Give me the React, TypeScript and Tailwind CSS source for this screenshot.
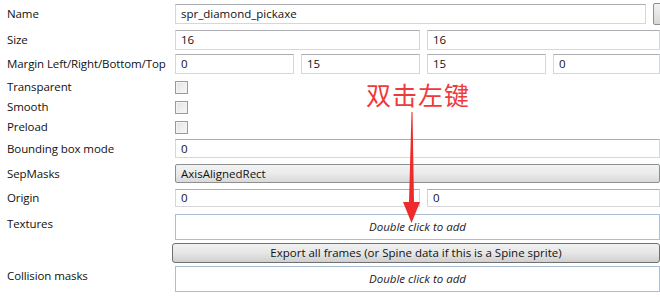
import React from "react";

const font = { fontFamily: '"Segoe UI", "Open Sans", "Noto Sans", sans-serif' };

function Field({ value, className = "" }: { value: string; className?: string }) {
  return (
    <div
      className={`h-full flex items-center pl-[5px] bg-white border border-[#d5d7db] border-t-[#abadb3] text-[11.5px] text-[#111] ${className}`}
    >
      {value}
    </div>
  );
}

function Check() {
  return (
    <div className="w-[13px] h-[13px] border border-[#9a9a9a] bg-gradient-to-br from-[#e2e2e2] to-[#f8f8f8] shadow-[inset_0_0_0_1px_#f4f4f4]" />
  );
}

function Row({
  label,
  h,
  mt,
  top = false,
  children,
}: {
  label: string;
  h: number;
  mt: number;
  top?: boolean;
  children: React.ReactNode;
}) {
  return (
    <div className="flex" style={{ height: h, marginTop: mt }}>
      <div
        className={`w-[175px] shrink-0 pl-[7px] whitespace-nowrap text-[11.5px] tracking-[-0.1px] text-[#111] flex ${top ? "items-start pt-[1px]" : "items-center"}`}
      >
        {label}
      </div>
      <div className="flex-1 min-w-0 flex items-center gap-[7px]">{children}</div>
    </div>
  );
}

function DropZone() {
  return (
    <div className="h-full w-full flex items-center justify-center bg-white border border-[#a9bfd6] text-[11.5px] italic text-[#222]">
      Double click to add
    </div>
  );
}

export default function App() {
  return (
    <div className="relative w-[660px] h-[297px] bg-white overflow-hidden" style={font}>
      <Row label="Name" h={20} mt={4}>
        <Field value="spr_diamond_pickaxe" className="flex-1" />
        <div className="w-[10px] h-[22px] -mr-[3px] border border-[#8e8f8f] rounded-[2px] bg-gradient-to-b from-[#f2f2f2] to-[#d8d8d8]" />
      </Row>
      <Row label="Size" h={20} mt={6}>
        <Field value="16" className="w-[245px]" />
        <Field value="16" className="flex-1" />
      </Row>
      <Row label="Margin Left/Right/Bottom/Top" h={20} mt={4}>
        <Field value="0" className="w-[119px]" />
        <Field value="15" className="w-[119px]" />
        <Field value="15" className="w-[119px]" />
        <Field value="0" className="flex-1" />
      </Row>
      <Row label="Transparent" h={18} mt={4}>
        <Check />
      </Row>
      <Row label="Smooth" h={18} mt={2}>
        <Check />
      </Row>
      <Row label="Preload" h={18} mt={2}>
        <Check />
      </Row>
      <Row label="Bounding box mode" h={19} mt={3}>
        <Field value="0" className="flex-1" />
      </Row>
      <Row label="SepMasks" h={19} mt={6}>
        <div className="h-full flex-1 flex items-center pl-[5px] border border-[#8e8f8f] rounded-[2px] bg-gradient-to-b from-[#f3f3f3] via-[#ebebeb] to-[#d9d9d9] text-[11.5px] text-[#111]">
          AxisAlignedRect
        </div>
      </Row>
      <Row label="Origin" h={18} mt={6}>
        <Field value="0" className="w-[245px]" />
        <Field value="0" className="flex-1" />
      </Row>
      <Row label="Textures" h={26} mt={7} top>
        <DropZone />
      </Row>
      <div className="flex h-[20px] mt-[3px] pl-[172px]">
        <div className="flex-1 flex items-center justify-center border border-[#707070] rounded-[3px] bg-gradient-to-b from-[#f2f2f2] via-[#e6e6e6] to-[#d0d0d0] text-[11.5px] text-[#111]">
          Export all frames (or Spine data if this is a Spine sprite)
        </div>
      </div>
      <Row label="Collision masks" h={26} mt={3} top>
        <DropZone />
      </Row>

      <div
        className="absolute left-[366px] top-[78px] text-[25px] leading-[32px] text-[#ee3a3a] tracking-[1px]"
        style={{ fontFamily: '"Noto Sans CJK SC", sans-serif' }}
      >
        双击左键
      </div>
      <svg className="absolute left-[400px] top-[110px]" width="26" height="116" viewBox="0 0 26 116">
        <polygon points="11.5,2 12.5,2 14,92 20,92 11.5,113 3,92 9,92" fill="#ee2a2a" />
      </svg>
    </div>
  );
}
